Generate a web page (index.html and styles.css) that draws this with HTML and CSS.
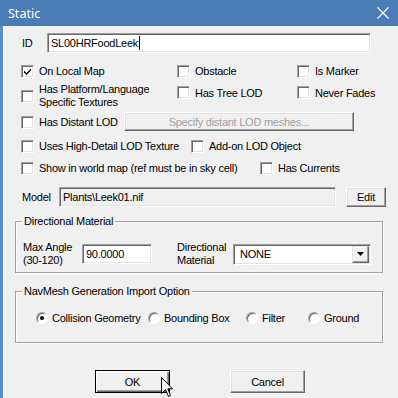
FILE: index.html
```html
<!DOCTYPE html>
<html lang="en">
<head>
    <meta charset="UTF-8">
    <title>Static</title>
    <link rel="stylesheet" href="styles.css">
</head>
<body>
<div class="window">
    <div class="titlebar">
        <span class="title">Static</span>
        <svg class="close" width="12" height="12" viewBox="0 0 12 12"><path d="M0.5 0.5 L11.5 11.5 M11.5 0.5 L0.5 11.5" stroke="#fff" stroke-width="1.2" fill="none"/></svg>
    </div>
    <div class="content">
        <div class="row id-row">
            <span class="lbl id-lbl">ID</span>
            <div class="edit id-edit">SL00HRFoodLeek<span class="caret"></span></div>
        </div>

        <div class="row r1">
            <div class="check"><span class="cb"><svg width="9" height="9" viewBox="0 0 9 9"><path d="M1 3.5 L3.5 6 L8 1.5 L8 3.5 L3.5 8 L1 5.5 Z" fill="#000"/></svg></span>On Local Map</div>
            <div class="check"><span class="cb"></span>Obstacle</div>
            <div class="check"><span class="cb"></span>Is Marker</div>
        </div>

        <div class="row r2">
            <div class="check"><span class="cb"></span><span class="two">Has Platform/Language<br>Specific Textures</span></div>
            <div class="check up"><span class="cb"></span>Has Tree LOD</div>
            <div class="check up"><span class="cb"></span>Never Fades</div>
        </div>

        <div class="row r3">
            <div class="check"><span class="cb"></span>Has Distant LOD</div>
            <div class="btn disabled lod-btn">Specify distant LOD meshes...</div>
        </div>

        <div class="row r4">
            <div class="check"><span class="cb"></span>Uses High-Detail LOD Texture</div>
            <div class="check"><span class="cb"></span>Add-on LOD Object</div>
        </div>

        <div class="row r5">
            <div class="check"><span class="cb"></span>Show in world map (ref must be in sky cell)</div>
            <div class="check"><span class="cb"></span>Has Currents</div>
        </div>

        <div class="row model-row">
            <span class="lbl model-lbl">Model</span>
            <div class="edit readonly model-edit">Plants\Leek01.nif</div>
            <div class="btn edit-btn">Edit</div>
        </div>

        <div class="group dir-group">
            <span class="group-title">Directional Material</span>
            <div class="dir-row">
                <span class="two">Max Angle<br>(30-120)</span>
                <div class="edit angle-edit">90.0000</div>
                <span class="two dir-lbl">Directional<br>Material</span>
                <div class="edit combo">NONE<span class="drop"><svg width="7" height="4" viewBox="0 0 7 4"><path d="M0 0 H7 L3.5 4 Z" fill="#000"/></svg></span></div>
            </div>
        </div>

        <div class="group nav-group">
            <span class="group-title">NavMesh Generation Import Option</span>
            <div class="radio-row">
                <div class="radio-item"><span class="rb on"></span>Collision Geometry</div>
                <div class="radio-item"><span class="rb"></span>Bounding Box</div>
                <div class="radio-item"><span class="rb"></span>Filter</div>
                <div class="radio-item"><span class="rb"></span>Ground</div>
            </div>
        </div>

        <div class="buttons">
            <div class="btn default dlg-btn">OK</div>
            <div class="btn dlg-btn">Cancel</div>
        </div>
    </div>
    <svg class="cursor" width="13" height="21" viewBox="0 0 13 21"><path d="M0.5 0.5 L0.5 16.5 L4.5 12.5 L7.5 19.5 L9.5 18.5 L6.8 11.8 L11.5 11.8 Z" fill="#fff" stroke="#000" stroke-width="1"/></svg>
</div>
</body>
</html>
```

FILE: styles.css
```css
body {
    margin: 0;
    background: #f0f0f0;
    font-family: "Liberation Sans", Arial, sans-serif;
    font-size: 11px;
    letter-spacing: -0.25px;
    color: #000;
}
.window {
    position: relative;
    width: 398px;
    height: 398px;
    overflow: hidden;
    background: #f0f0f0;
}
.titlebar {
    height: 26px;
    background: #4a7cb5;
    display: flex;
    align-items: center;
    justify-content: space-between;
    padding: 0 8px 0 8px;
}
.title {
    color: #fff;
    font-family: "Noto Sans", "Liberation Sans", sans-serif;
    font-size: 12.5px;
    letter-spacing: 0;
}
.close {
    margin-right: 1px;
}
.content {
    border-left: 3px solid #5d8cc3;
    box-shadow: inset 1px 0 0 #fff;
    padding: 7px 15px 0 12px;
    height: 365px;
}
.row {
    display: grid;
    align-items: center;
    padding-left: 6px;
}
.lbl {
    padding-left: 1px;
}

/* sunken boxes */
.edit, .cb {
    background: #fff;
    border: 1px solid;
    border-color: #a0a0a0 #fff #fff #a0a0a0;
    box-shadow: inset 1px 1px #696969, inset -1px -1px #e3e3e3;
    box-sizing: border-box;
}
.edit {
    height: 20px;
    display: flex;
    align-items: center;
    padding-left: 3px;
    white-space: nowrap;
}
.edit.readonly {
    background: #f0f0f0;
}
.caret {
    display: inline-block;
    width: 1px;
    height: 14px;
    background: #000;
    margin-left: 1px;
}
.cb {
    width: 13px;
    height: 13px;
    flex: none;
    display: flex;
    align-items: center;
    justify-content: center;
    margin-right: 5px;
}
.check {
    display: flex;
    align-items: center;
    white-space: nowrap;
}
.two {
    line-height: 13px;
    white-space: nowrap;
}

.id-row {
    grid-template-columns: 26px 324px;
    height: 20px;
}
.r1 {
    grid-template-columns: 156px 120px auto;
    height: 14px;
    margin-top: 11px;
}
.r2 {
    grid-template-columns: 156px 120px auto;
    height: 26px;
    margin-top: 5px;
}
.r2 .check.up {
    align-self: start;
    margin-top: 3px;
}
.r3 {
    grid-template-columns: 103px 230px;
    height: 20px;
    margin-top: 3px;
}
.r4 {
    grid-template-columns: 170px auto;
    height: 14px;
    margin-top: 7px;
}
.r5 {
    grid-template-columns: 239px auto;
    height: 14px;
    margin-top: 8px;
}
.model-row {
    grid-template-columns: 38px 277px 10px 40px;
    height: 20px;
    margin-top: 12px;
}
.model-edit {
    grid-column: 2;
}
.edit-btn {
    grid-column: 4;
    height: 20px;
}

/* raised buttons */
.btn {
    background: #f0f0f0;
    border: 1px solid;
    border-color: #fff #696969 #696969 #fff;
    box-shadow: inset -1px -1px #a0a0a0, inset 1px 1px #e3e3e3;
    box-sizing: border-box;
    display: flex;
    align-items: center;
    justify-content: center;
    white-space: nowrap;
}
.btn.disabled {
    color: #a0a0a0;
}
.lod-btn {
    height: 19px;
    align-self: start;
}
.btn.default {
    border: 1px solid #000;
    box-shadow: inset 1px 1px #fff, inset -1px -1px #696969, inset -2px -2px #a0a0a0;
}

/* group boxes */
.group {
    border: 1px solid #a0a0a0;
    box-shadow: inset 1px 1px #fff, 1px 1px #fff;
    width: 368px;
    box-sizing: border-box;
}
.group-title {
    display: block;
    width: max-content;
    margin: -8px 0 0 6px;
    padding: 0 2px;
    line-height: 14px;
    background: #f0f0f0;
}
.dir-group {
    margin-top: 14px;
    height: 52px;
}
.dir-row {
    display: grid;
    grid-template-columns: 59px 70px 25px 56px 138px;
    align-items: center;
    height: 20px;
    margin-top: 13px;
    padding-left: 7px;
}
.angle-edit {
    grid-column: 2;
}
.dir-lbl {
    grid-column: 4;
}
.combo {
    grid-column: 5;
    justify-content: space-between;
    padding: 0 1px 0 6px;
    height: 21px;
}
.drop {
    width: 17px;
    height: 17px;
    background: #f0f0f0;
    border: 1px solid;
    border-color: #e3e3e3 #696969 #696969 #e3e3e3;
    box-shadow: inset -1px -1px #a0a0a0, inset 1px 1px #fff;
    box-sizing: border-box;
    display: flex;
    align-items: center;
    justify-content: center;
}
.nav-group {
    margin-top: 18px;
    height: 52px;
}
.radio-row {
    display: grid;
    grid-template-columns: 112px 98px 62px auto;
    align-items: center;
    height: 14px;
    margin-top: 13px;
    padding-left: 20px;
}
.radio-item {
    display: flex;
    align-items: center;
    white-space: nowrap;
}
.rb {
    width: 12px;
    height: 12px;
    border-radius: 50%;
    background: #fff;
    border: 1px solid;
    border-color: #a0a0a0 #fff #fff #a0a0a0;
    box-shadow: inset 1px 1px #696969;
    box-sizing: border-box;
    margin-right: 4px;
    display: flex;
    align-items: center;
    justify-content: center;
    flex: none;
}
.rb.on::after {
    content: "";
    width: 4px;
    height: 4px;
    border-radius: 50%;
    background: #000;
}
.buttons {
    display: grid;
    grid-template-columns: 75px 60px 75px;
    margin: 27px 0 0 80px;
}
.dlg-btn {
    height: 23px;
}
.dlg-btn:last-child {
    grid-column: 3;
}
.cursor {
    position: absolute;
    left: 161px;
    top: 377px;
}
```
